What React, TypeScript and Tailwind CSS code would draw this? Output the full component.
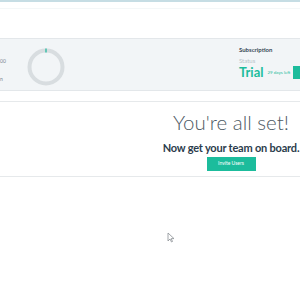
import React from "react";

export default function App() {
  return (
    <div className="relative w-[300px] h-[300px] overflow-hidden bg-white" style={{ fontFamily: "Lato, 'Open Sans', sans-serif" }}>
      <div className="h-[2px] bg-[#c6dde4]" />
      <div className="h-[6px]" />
      <div className="h-px bg-[#f4f7f8]" />
      <div className="mt-[29px] h-[53px] bg-[#f2f5f7] border-y border-[#e3e7ea] flex">
        <div className="w-[27px] shrink-0 flex flex-col text-[5px] text-[#7a8790] leading-none pt-[20px]">
          <span>00</span>
          <span className="mt-[13px]">n</span>
        </div>
        <div className="pt-[9px] shrink-0">
          <svg width="38" height="38" viewBox="0 0 38 38">
            <circle cx="19" cy="19" r="16.5" fill="none" stroke="#d8dde0" strokeWidth="4" />
            <rect x="18.25" y="0.5" width="1.5" height="4" fill="#3bbfa8" />
          </svg>
        </div>
        <div className="ml-[174px] pt-[8px] flex flex-col shrink-0">
          <span className="text-[6px] font-bold text-[#3a4a58] leading-none whitespace-nowrap">Subscription</span>
          <span className="mt-[5px] text-[6px] text-[#b9c3c9] leading-none">Status</span>
          <div className="mt-[2px] flex items-center">
            <span className="text-[13px] font-bold text-[#1cbc9c] leading-none">Trial</span>
            <span className="ml-[4px] text-[4.5px] text-[#1cbc9c] leading-none mt-[2px] whitespace-nowrap">29 days left</span>
            <div className="ml-[3px] w-[20px] h-[13px] bg-[#1cbc9c] shrink-0" />
          </div>
        </div>
      </div>
      <div className="mt-[10px] h-[76px] border-y border-[#e6e9eb] pl-[162px] flex flex-col items-center">
        <div className="mt-[10px] text-[20.5px] font-light text-[#4d5963] leading-none whitespace-nowrap">You're all set!</div>
        <div className="mt-[9px] text-[11px] tracking-[-0.2px] font-bold text-[#2b3c4c] leading-none whitespace-nowrap">Now get your team on board.</div>
        <div className="mt-[4px] w-[49px] h-[14px] bg-[#1cbc9c] flex items-center justify-center text-[5px] text-white leading-none">Invite Users</div>
      </div>
      <svg className="absolute left-[167px] top-[232px]" width="8" height="11" viewBox="0 0 8 11">
        <path d="M1 1 L1 9 L3 7 L4.5 10 L5.5 9.5 L4.2 6.6 L7 6.6 Z" fill="white" stroke="#8a8f94" strokeWidth="0.8" />
      </svg>
    </div>
  );
}
